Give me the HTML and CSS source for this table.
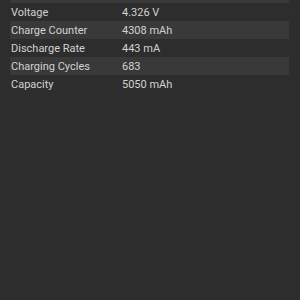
FILE: index.html
```html
<!DOCTYPE html>
<html lang="en">
<head>
    <meta charset="UTF-8">
    <meta name="viewport" content="width=device-width, initial-scale=1.0">
    <title>Battery Info</title>
    <link rel="stylesheet" href="styles.css">
</head>
<body>
    <div class="info-table">
        <div class="row">
            <div class="label">Temperature</div>
            <div class="value">31.2 °C</div>
        </div>
        <div class="row">
            <div class="label">Voltage</div>
            <div class="value">4.326 V</div>
        </div>
        <div class="row">
            <div class="label">Charge Counter</div>
            <div class="value">4308 mAh</div>
        </div>
        <div class="row">
            <div class="label">Discharge Rate</div>
            <div class="value">443 mA</div>
        </div>
        <div class="row">
            <div class="label">Charging Cycles</div>
            <div class="value">683</div>
        </div>
        <div class="row">
            <div class="label">Capacity</div>
            <div class="value">5050 mAh</div>
        </div>
    </div>
</body>
</html>
```

FILE: styles.css
```css
html, body {
    margin: 0;
    height: 100%;
    background-color: #2d2d2d;
    font-family: Roboto, "Noto Sans", sans-serif;
    overflow: hidden;
}
.info-table {
    margin: -15px 11px 0 10px;
}
.row {
    display: grid;
    grid-template-columns: 112px 1fr;
    height: 18px;
    align-items: center;
    font-size: 11px;
    color: #d2d2d2;
}
.row:nth-child(odd) {
    background-color: #393939;
}
.label {
    padding-left: 1px;
}
```
